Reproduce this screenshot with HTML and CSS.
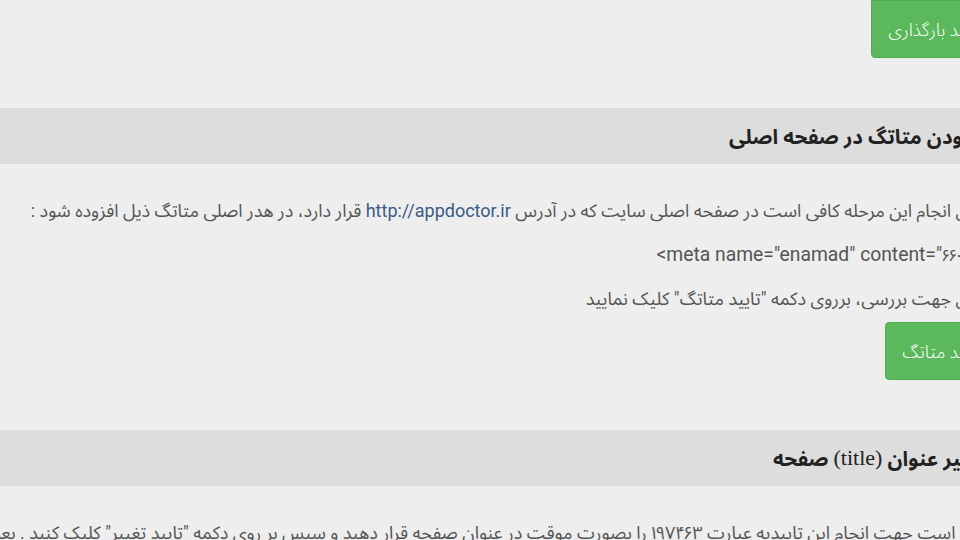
FILE: index.html
```html
<!DOCTYPE html>
<html lang="fa">
<head>
<meta charset="utf-8">
<link rel="stylesheet" href="styles.css">
</head>
<body>
<div class="page" dir="rtl">
  <div class="actions actions-top">
    <button class="btn btn-success">تایید بارگذاری</button>
  </div>

  <h3 class="section-title">افزودن متاتگ در صفحه اصلی</h3>
  <div class="section-body">
    <p class="text">برای انجام این مرحله کافی است در صفحه اصلی سایت که در آدرس <a class="link" href="#">http://appdoctor.ir</a> قرار دارد، در هدر اصلی متاتگ ذیل افزوده شود :</p>
    <p class="text code"><span dir="ltr" class="code-line">&lt;meta name="enamad" content="<span class="digits">۶۶۰۳۲</span>"/&gt;</span></p>
    <p class="text">برای جهت بررسی، برروی دکمه "تایید متاتگ" کلیک نمایید</p>
    <div class="actions">
      <button class="btn btn-success">تایید متاتگ</button>
    </div>
  </div>

  <h3 class="section-title">تغییر عنوان <span class="latin">(title)</span> صفحه</h3>
  <div class="section-body">
    <p class="text">لازم است جهت انجام این تاییدیه عبارت ۱۹۷۴۶۳ را بصورت موقت در عنوان صفحه قرار دهید و سپس بر روی دکمه "تایید تغییر" کلیک کنید . بعد از تایید می‌توانید عنوان را به حالت قبل برگردانید</p>
  </div>
</div>
</body>
</html>
```
FILE: styles.css
```css
html, body {
  margin: 0;
  padding: 0;
  background: #eeeeee;
  overflow: hidden;
  height: 540px;
}
.page {
  width: 1010px;
  font-family: Roboto, "Noto Sans Arabic UI", "Noto Sans Arabic", "DejaVu Sans", sans-serif;
  font-size: 18px;
  font-weight: 400;
  color: #555555;
}
.actions {
  display: flex;
  justify-content: flex-start;
  padding-right: 12px;
}
.actions-top {
  height: 108px;
  align-items: flex-start;
}
.btn {
  font-family: inherit;
  font-size: 18px;
  font-weight: 300;
  color: #ffffff;
  background: #5cb85c;
  border: 1px solid #4cae4c;
  border-radius: 4px;
  height: 58px;
  padding: 0 16px;
  cursor: pointer;
}
.actions-top .btn {
  border-top-left-radius: 0;
  border-top-right-radius: 0;
}
.section-title {
  margin: 0;
  background: #dddddd;
  height: 56px;
  display: flex;
  align-items: center;
  padding-right: 22px;
  font-family: "Liberation Serif", "Noto Sans Arabic UI", "Noto Sans Arabic", serif;
  font-weight: bold;
  font-size: 20.5px;
  color: #222222;
}
.latin {
  font-weight: normal;
  font-size: 22px;
  margin: 0 5px;
}
.section-body {
  padding: 36px 0 50px;
}
.text {
  margin: 0 0 22px;
  padding-right: 25px;
  line-height: 22px;
  white-space: nowrap;
}
.link {
  color: #3b5b86;
  text-decoration: none;
}
.code {
  font-size: 19.3px;
  padding-right: 6px;
}
.code-line {
  unicode-bidi: embed;
}
.digits {
  font-size: 17px;
}
.section-body .actions {
  margin-top: -10px;
}
```
